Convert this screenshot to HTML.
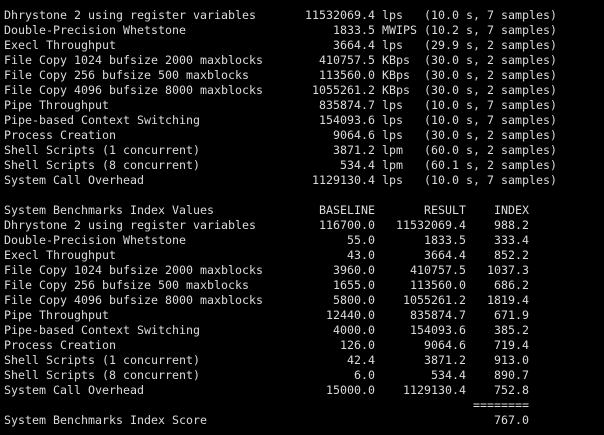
<!DOCTYPE html>
<html><head><meta charset="utf-8"><style>
html,body{margin:0;padding:0;background:#000;width:604px;height:435px;overflow:hidden}
#t{position:absolute;top:8px;left:0;width:604px;font-family:"DejaVu Sans Mono","Liberation Mono",monospace;font-size:11.63px;color:#dcdcdc}
.r{position:relative;height:15px;line-height:15px;white-space:pre}
.r span{position:absolute;top:0}
.n{left:4px}.a{right:229px}.u{left:382px}.p{left:424px}.b{right:138px}.i{right:75px}
</style></head><body><div id="t">
<div class="r"><span class="n">Dhrystone 2 using register variables</span><span class="a">11532069.4</span><span class="u">lps</span><span class="p">(10.0 s, 7 samples)</span></div>
<div class="r"><span class="n">Double-Precision Whetstone</span><span class="a">1833.5</span><span class="u">MWIPS</span><span class="p">(10.2 s, 7 samples)</span></div>
<div class="r"><span class="n">Execl Throughput</span><span class="a">3664.4</span><span class="u">lps</span><span class="p">(29.9 s, 2 samples)</span></div>
<div class="r"><span class="n">File Copy 1024 bufsize 2000 maxblocks</span><span class="a">410757.5</span><span class="u">KBps</span><span class="p">(30.0 s, 2 samples)</span></div>
<div class="r"><span class="n">File Copy 256 bufsize 500 maxblocks</span><span class="a">113560.0</span><span class="u">KBps</span><span class="p">(30.0 s, 2 samples)</span></div>
<div class="r"><span class="n">File Copy 4096 bufsize 8000 maxblocks</span><span class="a">1055261.2</span><span class="u">KBps</span><span class="p">(30.0 s, 2 samples)</span></div>
<div class="r"><span class="n">Pipe Throughput</span><span class="a">835874.7</span><span class="u">lps</span><span class="p">(10.0 s, 7 samples)</span></div>
<div class="r"><span class="n">Pipe-based Context Switching</span><span class="a">154093.6</span><span class="u">lps</span><span class="p">(10.0 s, 7 samples)</span></div>
<div class="r"><span class="n">Process Creation</span><span class="a">9064.6</span><span class="u">lps</span><span class="p">(30.0 s, 2 samples)</span></div>
<div class="r"><span class="n">Shell Scripts (1 concurrent)</span><span class="a">3871.2</span><span class="u">lpm</span><span class="p">(60.0 s, 2 samples)</span></div>
<div class="r"><span class="n">Shell Scripts (8 concurrent)</span><span class="a">534.4</span><span class="u">lpm</span><span class="p">(60.1 s, 2 samples)</span></div>
<div class="r"><span class="n">System Call Overhead</span><span class="a">1129130.4</span><span class="u">lps</span><span class="p">(10.0 s, 7 samples)</span></div>
<div class="r"></div>
<div class="r"><span class="n">System Benchmarks Index Values</span><span class="a">BASELINE</span><span class="b">RESULT</span><span class="i">INDEX</span></div>
<div class="r"><span class="n">Dhrystone 2 using register variables</span><span class="a">116700.0</span><span class="b">11532069.4</span><span class="i">988.2</span></div>
<div class="r"><span class="n">Double-Precision Whetstone</span><span class="a">55.0</span><span class="b">1833.5</span><span class="i">333.4</span></div>
<div class="r"><span class="n">Execl Throughput</span><span class="a">43.0</span><span class="b">3664.4</span><span class="i">852.2</span></div>
<div class="r"><span class="n">File Copy 1024 bufsize 2000 maxblocks</span><span class="a">3960.0</span><span class="b">410757.5</span><span class="i">1037.3</span></div>
<div class="r"><span class="n">File Copy 256 bufsize 500 maxblocks</span><span class="a">1655.0</span><span class="b">113560.0</span><span class="i">686.2</span></div>
<div class="r"><span class="n">File Copy 4096 bufsize 8000 maxblocks</span><span class="a">5800.0</span><span class="b">1055261.2</span><span class="i">1819.4</span></div>
<div class="r"><span class="n">Pipe Throughput</span><span class="a">12440.0</span><span class="b">835874.7</span><span class="i">671.9</span></div>
<div class="r"><span class="n">Pipe-based Context Switching</span><span class="a">4000.0</span><span class="b">154093.6</span><span class="i">385.2</span></div>
<div class="r"><span class="n">Process Creation</span><span class="a">126.0</span><span class="b">9064.6</span><span class="i">719.4</span></div>
<div class="r"><span class="n">Shell Scripts (1 concurrent)</span><span class="a">42.4</span><span class="b">3871.2</span><span class="i">913.0</span></div>
<div class="r"><span class="n">Shell Scripts (8 concurrent)</span><span class="a">6.0</span><span class="b">534.4</span><span class="i">890.7</span></div>
<div class="r"><span class="n">System Call Overhead</span><span class="a">15000.0</span><span class="b">1129130.4</span><span class="i">752.8</span></div>
<div class="r"><span class="i">========</span></div>
<div class="r"><span class="n">System Benchmarks Index Score</span><span class="i">767.0</span></div>
</div></body></html>
